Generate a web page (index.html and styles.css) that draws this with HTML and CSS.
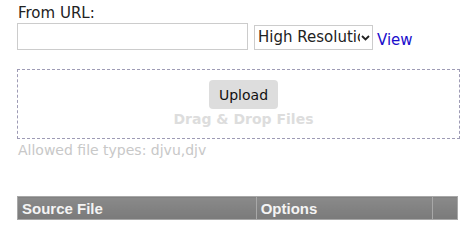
FILE: index.html
```html
<!DOCTYPE html>
<html lang="en">
<head>
    <meta charset="UTF-8">
    <title>Convert DjVu</title>
    <link rel="stylesheet" href="styles.css">
</head>
<body>
    <div class="page">
        <div class="url-group">
            <label for="url">From URL:</label>
            <div class="url-row">
                <input type="text" id="url" class="url-input">
                <div class="select-wrap">
                    <select class="res-select">
                        <option>High Resolution</option>
                        <option>Low Resolution</option>
                    </select>
                    <svg class="chev" width="9" height="6" viewBox="0 0 9 6">
                        <path d="M1 1 L4.5 4.5 L8 1" fill="none" stroke="#222" stroke-width="1.8"/>
                    </svg>
                </div>
                <a href="#" class="view-link">View</a>
            </div>
        </div>

        <div class="dropzone">
            <button class="upload-btn">Upload</button>
            <div class="drop-text">Drag &amp; Drop Files</div>
        </div>
        <div class="allowed">Allowed file types: djvu,djv</div>

        <table class="files">
            <thead>
                <tr>
                    <th class="col-src">Source File</th>
                    <th class="col-opt">Options</th>
                    <th class="col-x"></th>
                </tr>
            </thead>
        </table>
    </div>
</body>
</html>
```

FILE: styles.css
```css
body {
    margin: 0;
    font-family: "DejaVu Sans", Verdana, sans-serif;
    background-color: #fff;
    color: #222;
}
.page {
    padding: 4px 16px 0 17px;
}
.url-group label {
    display: block;
    font-size: 15px;
    line-height: 19px;
    margin-left: 1px;
}
.url-row {
    display: flex;
    align-items: center;
}
.url-input {
    width: 231px;
    height: 27px;
    box-sizing: border-box;
    border: 1px solid #ccc;
    margin: 0;
    padding: 2px 4px;
}
.select-wrap {
    position: relative;
    margin-left: 6px;
    margin-top: 1px;
}
.res-select {
    appearance: none;
    -webkit-appearance: none;
    display: block;
    width: 119px;
    height: 25px;
    box-sizing: border-box;
    border: 1px solid #ccc;
    border-radius: 0;
    background-color: #fff;
    font-family: "DejaVu Sans", Verdana, sans-serif;
    font-size: 15px;
    color: #222;
    padding: 0 12px 0 3px;
}
.chev {
    position: absolute;
    right: 3px;
    top: 10px;
    background: #fff;
    pointer-events: none;
}
.view-link {
    color: #1a0dcc;
    text-decoration: none;
    font-size: 15px;
    margin-left: 4px;
    margin-top: 6px;
}
.dropzone {
    margin-top: 19px;
    height: 70px;
    width: 443px;
    box-sizing: border-box;
    border: 1px dashed #9e9bb5;
    display: flex;
    flex-direction: column;
    align-items: center;
    padding: 10px 0 0 10px;
}
.upload-btn {
    background-color: #ddd;
    border: none;
    border-radius: 4px;
    font-family: "DejaVu Sans", Verdana, sans-serif;
    font-size: 14px;
    color: #111;
    width: 69px;
    height: 29px;
    padding: 0;
    cursor: pointer;
}
.drop-text {
    color: #ddd;
    font-weight: bold;
    font-size: 14px;
    line-height: 18px;
    margin-top: 1px;
}
.allowed {
    color: #c8c8c8;
    font-size: 14px;
    line-height: 18px;
    margin-top: 2px;
    margin-left: 1px;
}
.files {
    margin-top: 37px;
    width: 441px;
    border-collapse: collapse;
}
.files th {
    background: linear-gradient(#8a8a8a, #7a7a7a);
    color: #f4f4f4;
    font-family: "Liberation Sans", Arial, sans-serif;
    font-size: 15px;
    font-weight: bold;
    text-align: left;
    height: 22px;
    padding: 0 4px;
    border: 1px solid #a8a8a8;
}
.col-src {
    width: 232px;
}
.col-opt {
    width: 169px;
}
.col-x {
    width: 16px;
}
```
